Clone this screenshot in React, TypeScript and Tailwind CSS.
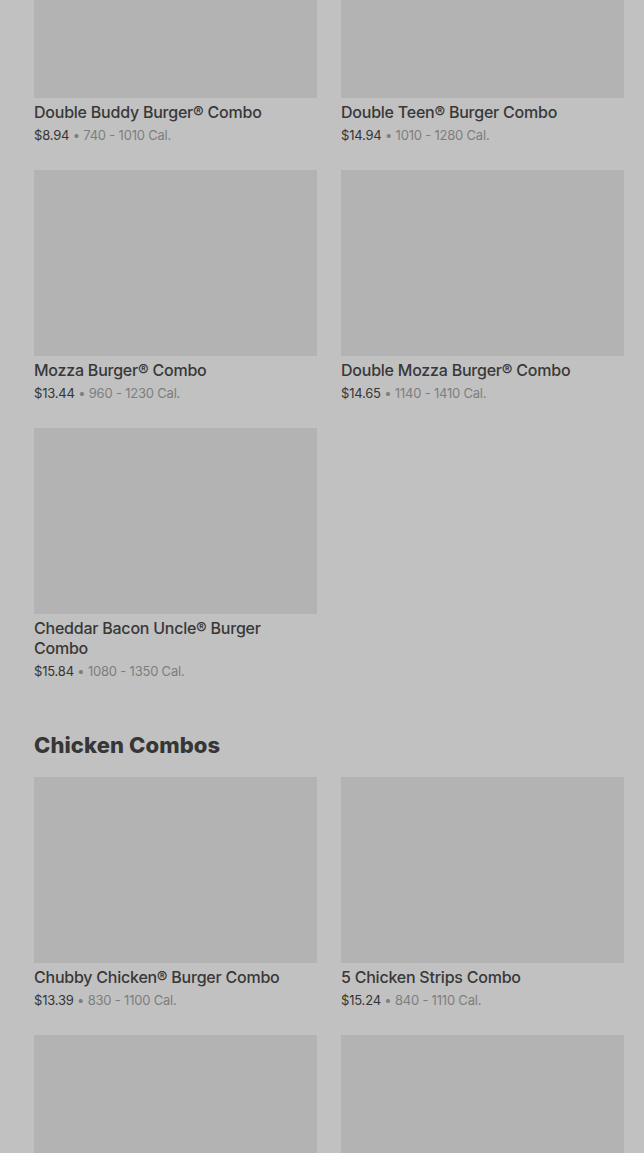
const burgerCombos = [
  { name: "Double Buddy Burger® Combo", price: "$8.94", cal: "740 - 1010 Cal." },
  { name: "Double Teen® Burger Combo", price: "$14.94", cal: "1010 - 1280 Cal." },
  { name: "Mozza Burger® Combo", price: "$13.44", cal: "960 - 1230 Cal." },
  { name: "Double Mozza Burger® Combo", price: "$14.65", cal: "1140 - 1410 Cal." },
  { name: "Cheddar Bacon Uncle® Burger Combo", price: "$15.84", cal: "1080 - 1350 Cal." },
];

const chickenCombos = [
  { name: "Chubby Chicken® Burger Combo", price: "$13.39", cal: "830 - 1100 Cal." },
  { name: "5 Chicken Strips Combo", price: "$15.24", cal: "840 - 1110 Cal." },
];

type Item = { name: string; price: string; cal: string };

const Card = ({ item }: { item: Item }) => (
  <div className="flex flex-col">
    <div className="h-[186px] w-full bg-[#b3b3b3]" />
    <p className="mt-1 pr-4 text-[16px] leading-5 font-medium tracking-[-0.23px] text-[#383838]">
      {item.name}
    </p>
    <p className="mt-[3px] text-[13px] leading-5 tracking-[-0.2px] text-[#7e7e7e]">
      <span className="text-[#353535]">{item.price}</span> • {item.cal}
    </p>
  </div>
);

export default function App() {
  return (
    <div
      className="h-[1153px] w-full overflow-hidden bg-[#c1c1c1] pl-[34px] pr-5"
      style={{ fontFamily: "Inter, 'Noto Sans', sans-serif" }}
    >
      <div className="-mt-[88px] grid grid-cols-2 gap-x-6 gap-y-[25px]">
        {burgerCombos.map((item) => (
          <Card key={item.name} item={item} />
        ))}
      </div>

      <h2 className="mt-[50px] mb-[18px] text-[22px] leading-7 font-extrabold tracking-[0.1px] text-[#363636]">
        Chicken Combos
      </h2>

      <div className="grid grid-cols-2 gap-x-6 gap-y-[25px]">
        {chickenCombos.map((item) => (
          <Card key={item.name} item={item} />
        ))}
        {/* next row, only the images are in view */}
        <div className="h-[186px] w-full bg-[#b3b3b3]" />
        <div className="h-[186px] w-full bg-[#b3b3b3]" />
      </div>
    </div>
  );
}
